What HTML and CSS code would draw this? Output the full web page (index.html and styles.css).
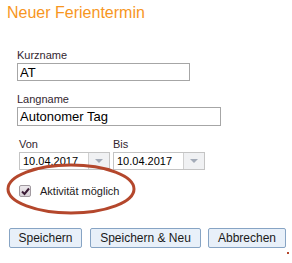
FILE: index.html
```html
<!DOCTYPE html>
<html lang="de">
<head>
    <meta charset="UTF-8">
    <title>Neuer Ferientermin</title>
    <link rel="stylesheet" href="styles.css">
</head>
<body>
    <div class="dialog">
        <h1 class="title">Neuer Ferientermin</h1>

        <div class="form">
            <label class="field">
                <span class="label">Kurzname</span>
                <input class="text short" type="text" value="AT">
            </label>
            <label class="field">
                <span class="label">Langname</span>
                <input class="text long" type="text" value="Autonomer Tag">
            </label>

            <div class="dates">
                <div class="date-field">
                    <span class="label">Von</span>
                    <div class="combo">
                        <span class="combo-value">10.04.2017</span>
                        <span class="combo-btn"><span class="arrow"></span></span>
                    </div>
                </div>
                <div class="date-field">
                    <span class="label">Bis</span>
                    <div class="combo wide">
                        <span class="combo-value">10.04.2017</span>
                        <span class="combo-btn"><span class="arrow"></span></span>
                    </div>
                </div>
            </div>

            <div class="check-row">
                <span class="checkbox">
                    <svg width="9" height="9" viewBox="0 0 9 9"><path d="M1 4.5 L3.5 7 L8 1.5" fill="none" stroke="#3b1c36" stroke-width="2"/></svg>
                </span>
                <span class="check-label">Aktivität möglich</span>
            </div>
        </div>

        <div class="buttons">
            <button class="btn save">Speichern</button>
            <button class="btn save-new">Speichern &amp; Neu</button>
            <button class="btn cancel">Abbrechen</button>
        </div>

        <svg class="annotation" width="140" height="60" viewBox="0 0 140 60">
            <ellipse cx="66" cy="27" rx="63" ry="24" fill="none" stroke="#b4472c" stroke-width="3"/>
        </svg>
        <span class="stray"></span>
    </div>
</body>
</html>
```
FILE: styles.css
```css
body {
    margin: 0;
    background-color: #fff;
    font-family: "Liberation Sans", Arial, sans-serif;
    color: #000;
}
.dialog {
    position: relative;
    width: 292px;
    height: 263px;
    overflow: hidden;
}
.title {
    margin: 0;
    padding: 4px 0 0 7px;
    font-size: 16px;
    font-weight: normal;
    line-height: 18px;
    color: #f7961e;
}
.form {
    padding: 27px 0 0 17px;
}
.field {
    display: block;
    margin-bottom: 12px;
}
.label {
    display: block;
    font-size: 11px;
    line-height: 13px;
    color: #33262f;
    margin-bottom: 1px;
}
.text {
    display: block;
    box-sizing: border-box;
    height: 18px;
    margin: 0;
    padding: 0 2px;
    border: 1px solid #a6a6a6;
    font-family: "Liberation Sans", Arial, sans-serif;
    font-size: 13px;
    color: #000;
    outline: none;
}
.short {
    width: 173px;
}
.long {
    width: 204px;
    height: 19px;
}
.dates {
    display: flex;
    gap: 3px;
    padding-left: 2px;
    margin-top: 4px;
}
.date-field .label {
    margin-bottom: 1px;
}
.combo {
    display: flex;
    box-sizing: border-box;
    width: 91px;
    height: 18px;
    border: 1px solid #c4c4c4;
}
.combo.wide {
    width: 92px;
}
.combo-value {
    flex: 1;
    padding-left: 3px;
    font-size: 11px;
    line-height: 16px;
}
.combo-btn {
    width: 20px;
    border-left: 1px solid #d0d0d0;
    background-color: #f0f1f3;
    display: flex;
    align-items: center;
    justify-content: center;
}
.arrow {
    width: 0;
    height: 0;
    border-left: 4px solid transparent;
    border-right: 4px solid transparent;
    border-top: 4px solid #a3abb8;
}
.check-row {
    display: flex;
    align-items: center;
    gap: 9px;
    margin-top: 15px;
    padding-left: 2px;
}
.checkbox {
    box-sizing: border-box;
    width: 12px;
    height: 12px;
    border: 1px solid #a19aa0;
    border-radius: 2px;
    background: linear-gradient(#ece8ec, #d9d2d8);
    display: flex;
    align-items: center;
    justify-content: center;
}
.check-label {
    font-size: 11px;
    color: #221a22;
}
.buttons {
    display: flex;
    gap: 8px;
    padding: 31px 0 0 9px;
}
.btn {
    box-sizing: border-box;
    height: 20px;
    margin: 0;
    padding: 0;
    border: 1px solid #87a4c4;
    border-radius: 2px;
    background-color: #e8f0f9;
    font-family: "Liberation Sans", Arial, sans-serif;
    font-size: 12px;
    color: #1a1a1a;
}
.save {
    width: 73px;
}
.save-new {
    width: 111px;
}
.cancel {
    width: 78px;
    margin-left: -1px;
}
.annotation {
    position: absolute;
    left: 5px;
    top: 162px;
}
.stray {
    position: absolute;
    left: 287px;
    top: 252px;
    width: 2px;
    height: 2px;
    background-color: #b4472c;
}
```
